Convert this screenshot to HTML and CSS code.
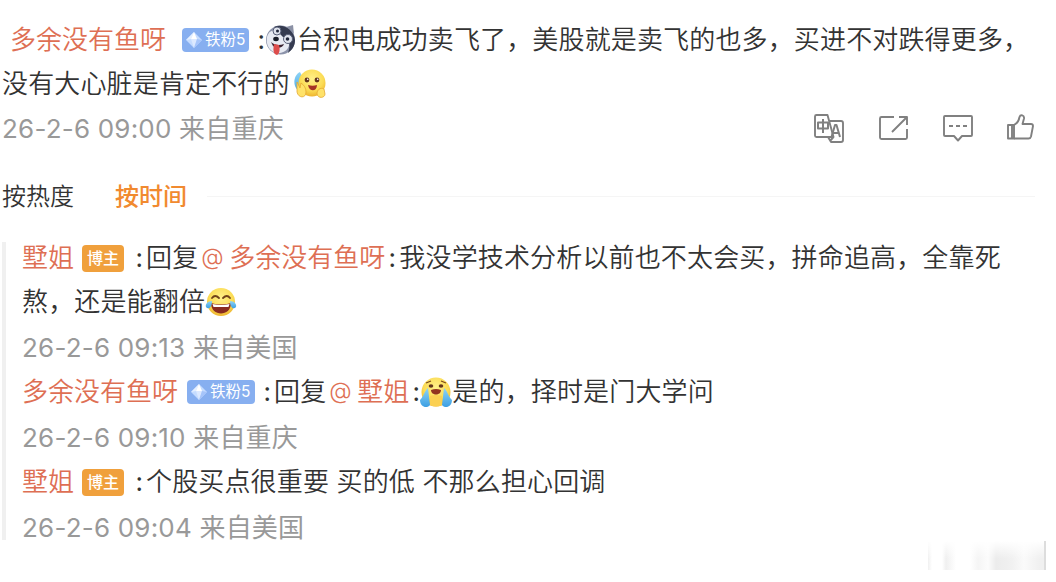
FILE: index.html
```html
<!DOCTYPE html>
<html lang="zh-CN">
<head>
    <meta charset="UTF-8">
    <title>评论</title>
    <meta name="viewport" content="width=device-width,initial-scale=1">
    <link rel="stylesheet" href="styles.css">
</head>
<body>
    <svg class="defs" width="0" height="0">
        <defs>
            <radialGradient id="skin" cx=".5" cy=".35" r=".65">
                <stop offset="0" stop-color="#fff08a"/>
                <stop offset=".65" stop-color="#fbdc55"/>
                <stop offset="1" stop-color="#eeb42f"/>
            </radialGradient>
            <linearGradient id="tear" x1="0" y1="0" x2="0" y2="1">
                <stop offset="0" stop-color="#8fd4f5"/>
                <stop offset="1" stop-color="#3c9fe3"/>
            </linearGradient>
            <symbol id="gem" viewBox="0 0 16 16">
                <path d="M8 0 16 8 8 16 0 8z" fill="#c5dcff"/>
                <path d="M8 0 5 7 0 8z" fill="#e4efff"/>
                <path d="M8 0 11 7 5 7z" fill="#fff"/>
                <path d="M5 7h6L8 16z" fill="#dce9ff"/>
                <path d="M11 7 16 8 8 16z" fill="#a5c4fa"/>
            </symbol>
        </defs>
    </svg>

    <div class="comment">
        <div class="text">
            <a class="name">多余没有鱼呀</a><span class="fans"><svg><use href="#gem"/></svg>铁粉5</span><span class="colon">:</span><svg class="emoji dog" viewBox="0 0 32 32">
                <path d="M21 3l7-2 1 9z" fill="#8b91a5"/>
                <circle cx="15.500" cy="16" r="14.500" fill="#8c93aa"/>
                <path d="M9 3C18-1 29 6 30 16c0 6-3 10-7 13 2-6 2-10-1-13-5-3-8-6-13-13z" fill="#353b50"/>
                <path d="M2 13C4 6 9 5 13 8l5 5c5 1 8 6 5 11-3 5-11 7-16 3C3 24 1 19 2 13z" fill="#e7eaf2"/>
                <circle cx="12" cy="7" r="4" fill="#dfe3ed" stroke="#596078"/>
                <circle cx="12.500" cy="7" r="1.500" fill="#22273b"/>
                <circle cx="23" cy="15" r="4.500" fill="#dfe3ed" stroke="#596078"/>
                <circle cx="22.500" cy="15" r="1.800" fill="#22273b"/>
                <ellipse cx="11" cy="15" rx="2.800" ry="2.200" fill="#191c28"/>
                <path d="M6 18c3 3 8 4 13 2-1 4-7 5-11 2z" fill="#3a2431"/>
                <path d="M9 20l5 1c1 4 1 8-2 10-4-1-4-5-3-11z" fill="#dd4c4b"/>
            </svg>台积电成功卖飞了，美股就是卖飞的也多，买进不对跌得更多，<br>
            没有大心脏是肯定不行的<svg class="emoji hug" viewBox="0 0 32 32">
                <path d="M6 4C0 7-1 15 2 20l6 8 6-8z" fill="url(#tear)"/>
                <circle cx="18" cy="15" r="13.500" fill="url(#skin)"/>
                <circle cx="13" cy="12" r="2.400" fill="#63351d"/>
                <circle cx="23" cy="12" r="2.400" fill="#63351d"/>
                <circle cx="13.700" cy="11.300" r=".8" fill="#fff"/>
                <circle cx="23.700" cy="11.300" r=".8" fill="#fff"/>
                <path d="M14 17c3 1 6 1 9 0 0 7-8 7-9 0z" fill="#a53425"/>
                <path d="M3 14l3 6 1-5c3 2 5 5 5 9 0 7-8 6-9 0z" fill="#ffe269" stroke="#e4aa34" stroke-width=".8"/>
                <path d="M30 21c-4-2-7 1-7 5 1 5 8 4 8 0z" fill="#ffe269" stroke="#e4aa34" stroke-width=".8"/>
            </svg>
        </div>
        <div class="info">
            <span class="time">26-2-6 09:00 来自重庆</span>
            <div class="tools">
                <svg viewBox="0 0 32 32">
                    <path d="M3.500 2h11l6 22h-17Q2 24 2 22.500v-19Q2 2 3.500 2z"/>
                    <path d="M16 8h12q2 0 2 2v17q0 2-2 2H18l-3-5M17 28l3.500-4"/>
                    <path d="M5 9.500h10v6H5zM10 6v14M18.500 24 22 12h1.500L27 24M20 20h6" stroke-width="2"/>
                </svg>
                <svg viewBox="0 0 32 32">
                    <path d="M17 4H4.500Q3 4 3 5.500v19Q3 26 4.500 26h24q1.500 0 1.500-1.500V16"/>
                    <path d="M15 19 29.500 4.500M22 4h8v8"/>
                </svg>
                <svg viewBox="0 0 32 32">
                    <path d="M4 3h26q1 0 1 1v18q0 1-1 1h-9l-4 4.500L13 23H4q-1 0-1-1V4q0-1 1-1z"/>
                    <path d="M8 13h4M15 13h4M22 13h4"/>
                </svg>
                <svg viewBox="0 0 32 32">
                    <path d="M3 12h6v13.500H3zM7 12v13.500"/>
                    <path d="M9 12c4-2 5-5 5.500-8 1-3 5-2 4.500 1.500L17.500 11H26q2 0 2 2l-2 10.500q-.5 2-2.500 2H9"/>
                </svg>
            </div>
        </div>
    </div>

    <div class="sort">
        <span class="sort-item">按热度</span>
        <span class="sort-item on">按时间</span>
        <i class="sort-line"></i>
    </div>

    <div class="replies">
        <div class="text">
            <a class="name">墅姐</a><span class="owner">博主</span><span class="colon">:</span>回复<a class="at"><i>@</i>多余没有鱼呀</a><span class="colon2">:</span>我没学技术分析以前也不太会买，拼命追高，全靠死<br>
            熬，还是能翻倍<svg class="emoji joy" viewBox="0 0 32 32">
                <circle cx="16" cy="16" r="14" fill="url(#skin)"/>
                <path d="M7 12q3-4 7 0M18 12q4-4 7 0" fill="none" stroke="#704119" stroke-width="1.800" stroke-linecap="round"/>
                <path d="M6 17q10 3 20 0c0 14-20 14-20 0z" fill="#892b20"/>
                <path d="M7.500 18q8.500 2 17 0l-1 3h-15z" fill="#fff"/>
                <path d="M7 15c-4 0-7 3-6 6 2 3 6 1 6-6zM25 15c4 0 7 3 6 6-2 3-6 1-6-6z" fill="url(#tear)"/>
            </svg>
        </div>
        <div class="info"><span class="time">26-2-6 09:13 来自美国</span></div>
        <div class="text">
            <a class="name">多余没有鱼呀</a><span class="fans"><svg><use href="#gem"/></svg>铁粉5</span><span class="colon">:</span>回复<a class="at"><i>@</i>墅姐</a><span class="colon2">:</span><svg class="emoji sob" viewBox="0 0 32 32">
                <circle cx="16" cy="16" r="14.500" fill="url(#skin)"/>
                <path d="M6 7l5-2M21 5l5 2" stroke="#7b491b" stroke-width="1.300"/>
                <ellipse cx="11" cy="10" rx="2.300" ry="1.800" fill="#63351d"/>
                <ellipse cx="21" cy="10" rx="2.300" ry="1.800" fill="#63351d"/>
                <path d="M11 14q5-2 10 0c0 6-10 6-10 0z" fill="#923320"/>
                <path d="M8 12c-3 2-4 8-8 12 0 7 7 9 10 5zM24 12c3 2 4 8 8 12 0 7-7 9-10 5z" fill="url(#tear)"/>
                <path d="M10 20q6-2 12 0v9q-6 3-12 0z" fill="#fbd052"/>
            </svg>是的，择时是门大学问
        </div>
        <div class="info"><span class="time">26-2-6 09:10 来自重庆</span></div>
        <div class="text">
            <a class="name">墅姐</a><span class="owner">博主</span><span class="colon">:</span>个股买点很重要 买的低 不那么担心回调
        </div>
        <div class="info"><span class="time">26-2-6 09:04 来自美国</span></div>
    </div>
    <div class="smudge"></div>
</body>
</html>
```
FILE: styles.css
```css
html,body{
    height:100%;
}
body{
    margin:0;
    padding-top:18px;
    box-sizing:border-box;
    overflow:hidden;
    background:#fff;
    color:#333;
    font-family:Inter,"Noto Sans CJK SC",sans-serif;
    font-size:26px;
    line-height:44px;
}
i{
    font-style:normal;
}
.defs{
    position:absolute;
}
.comment{
    padding-left:2px;
}
.text{
    white-space:nowrap;
    letter-spacing:.15px;
    font-weight:350;
}
.comment .text{
    height:88px;
}
.name,.at{
    color:#de6f54;
    letter-spacing:0;
}
.comment .name{
    margin-left:8px;
}
.fans,.owner{
    display:inline-flex;
    align-items:center;
    box-sizing:border-box;
    border-radius:4px;
    color:#fff;
    letter-spacing:0;
}
.fans{
    width:67px;
    height:24px;
    margin-left:16px;
    padding-left:4px;
    background:#87aff0;
    font-size:15.5px;
    font-weight:400;
    line-height:24px;
    vertical-align:1px;
}
.fans svg{
    width:16px;
    height:16px;
    margin-right:3px;
}
.replies .fans{
    width:68px;
    margin-left:9px;
}
.owner{
    justify-content:center;
    width:42px;
    height:27px;
    margin-left:8px;
    background:#f0a03c;
    font-size:16px;
    font-weight:500;
    line-height:27px;
    vertical-align:3px;
}
.colon,.colon2{
    display:inline-block;
    width:16px;
    text-align:right;
    letter-spacing:0;
    font-weight:400;
}
.replies .colon{
    width:19px;
    padding-right:3px;
    box-sizing:border-box;
}
.replies .owner + .colon{
    width:22px;
}
.colon2{
    width:14px;
    text-align:center;
}
.at i{
    display:inline-block;
    width:22px;
    height:24px;
    margin:0 6px 0 3px;
    font-size:23px;
    line-height:24px;
    vertical-align:2px;
}
.emoji{
    width:32px;
    height:32px;
    vertical-align:-7px;
}
.hug{
    margin-left:4px;
}
.sob{
    margin-left:-3px;
}
.info{
    display:flex;
    align-items:center;
    justify-content:space-between;
    height:45px;
}
.time{
    color:#999;
    font-weight:400;
    letter-spacing:.2px;
}
.tools{
    display:flex;
    gap:32px;
    padding-right:19px;
}
.tools svg{
    width:32px;
    height:32px;
    fill:none;
    stroke:#808080;
    stroke-width:1.9;
    stroke-linejoin:round;
}
.sort{
    display:flex;
    align-items:center;
    height:45px;
    margin:23px 21px 0 2px;
    font-size:24px;
}
.sort-item{
    margin-right:41px;
    font-weight:350;
}
.sort-item.on{
    margin-right:20px;
    color:#f18a30;
    font-weight:500;
}
.sort-line{
    flex:1;
    height:1px;
    background:#f5f5f5;
}
.replies{
    display:flow-root;
    height:298px;
    margin:23px 0 0 2px;
    padding-left:16px;
    border-left:4px solid #f0f0f0;
}
.replies .text{
    height:45px;
}
.replies .text:first-child{
    height:89px;
    margin-top:-6px;
}
.smudge{
    width:118px;
    height:29px;
    margin:1px 0 0 928px;
    box-sizing:border-box;
    border-right:2px solid #ddd;
    background:linear-gradient(#fff,transparent 60%),linear-gradient(90deg,#f0f0f0 0,#fff 4px,#fff 14px,#f0f0f0 18px,#fff 28px,#fff 42px,#f5f5f5 50px,#fcfcfc 60px,#ececec 68px,#f1f1f1 84px,#fafafa 96px,#f0f0f0 112px);
}
```
